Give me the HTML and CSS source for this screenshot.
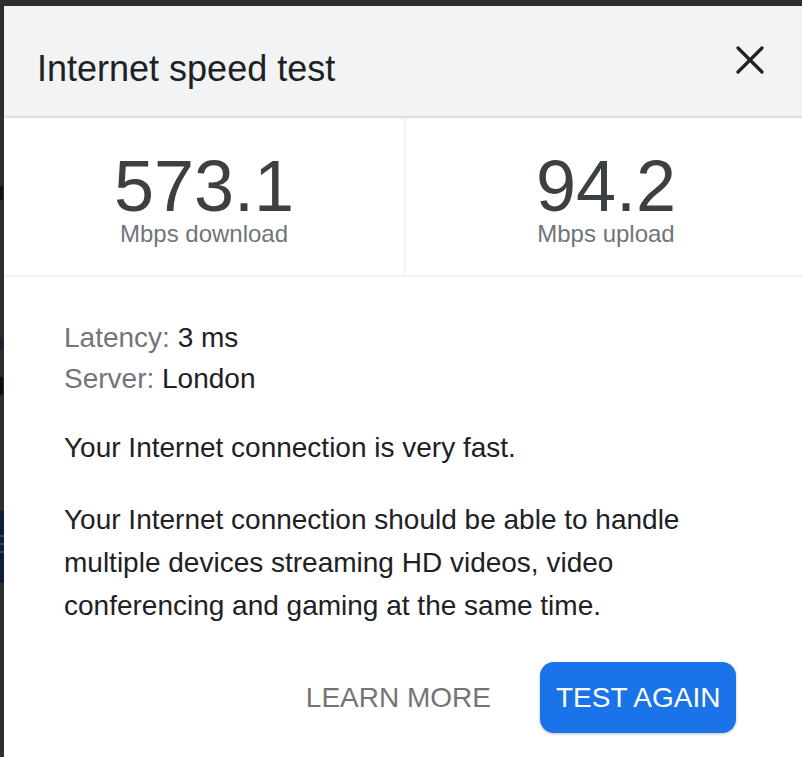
FILE: index.html
```html
<!DOCTYPE html>
<html lang="en">
<head>
<meta charset="utf-8">
<title>Internet speed test</title>
<link rel="stylesheet" href="styles.css">
</head>
<body>
<div class="page">
  <div class="strip">
    <div class="mark mark-a"></div>
    <div class="mark mark-b"></div>
    <div class="mark mark-c"></div>
    <div class="navy">
      <div class="navy-line l1"></div>
      <div class="navy-line l2"></div>
      <div class="navy-line l3"></div>
    </div>
  </div>
  <div class="dialog">
    <header class="header">
      <h1 class="title">Internet speed test</h1>
      <button class="close" aria-label="Close">
        <svg width="28" height="28" viewBox="0 0 28 28"><path d="M2 2 L26 26 M26 2 L2 26" stroke="#202124" stroke-width="3.2" stroke-linecap="round" fill="none"/></svg>
      </button>
    </header>
    <section class="results">
      <div class="result">
        <div class="value">573.1</div>
        <div class="unit">Mbps download</div>
      </div>
      <div class="vdiv"></div>
      <div class="result">
        <div class="value">94.2</div>
        <div class="unit">Mbps upload</div>
      </div>
    </section>
    <section class="body">
      <div class="meta">
        <div><span class="key">Latency:</span> 3 ms</div>
        <div><span class="key">Server:</span> London</div>
      </div>
      <p class="summary">Your Internet connection is very fast.</p>
      <p class="desc">Your Internet connection should be able to handle multiple devices streaming HD videos, video conferencing and gaming at the same time.</p>
      <div class="actions">
        <button class="btn-text">LEARN MORE</button>
        <button class="btn-primary">TEST AGAIN</button>
      </div>
    </section>
  </div>
</div>
</body>
</html>
```
FILE: styles.css
```css
html, body {
  margin: 0;
  padding: 0;
  background: #2e2e2e;
  overflow: hidden;
  font-family: "Liberation Sans", Arial, sans-serif;
}
.page {
  display: flex;
  padding-top: 6px;
  height: 757px;
  box-sizing: border-box;
  width: 806px;
}
.strip {
  width: 4px;
  flex: none;
  display: flex;
  flex-direction: column;
}
.mark {
  width: 3px;
}
.mark-a { margin-top: 180px; height: 14px; background: #101010; }
.mark-b { margin-top: 137px; height: 13px; background: #1a2030; border-radius: 0 3px 3px 0; }
.mark-c { margin-top: 27px; height: 18px; background: #120a0a; }
.navy {
  margin-top: 116px;
  height: 72px;
  width: 4px;
  background: #0b1d3b;
  display: flex;
  flex-direction: column;
}
.navy-line { height: 2px; background: #3b4250; }
.l1 { margin-top: 24px; }
.l2 { margin-top: 6px; }
.l3 { margin-top: 6px; }

.dialog {
  width: 802px;
  flex: none;
  background: #fff;
  display: flex;
  flex-direction: column;
}
.header {
  height: 110px;
  background: #f1f3f4;
  border-bottom: 1px solid #d6d8db;
  box-shadow: 0 1px 2px rgba(0,0,0,0.12);
  display: flex;
  align-items: flex-start;
  position: relative;
  z-index: 1;
}
.title {
  margin: 42px 0 0 33px;
  font-size: 36px;
  font-weight: 400;
  color: #202124;
  line-height: normal;
}
.close {
  margin: 40px 42px 0 auto;
  padding: 0;
  border: 0;
  background: none;
  width: 28px;
  height: 28px;
  display: block;
}
.close svg { display: block; }

.results {
  display: grid;
  grid-template-columns: 1fr 2px 1fr;
  border-bottom: 2px solid #f1f3f4;
  margin-top: 1px;
}
.vdiv { background: #f1f3f4; }
.result {
  display: flex;
  flex-direction: column;
  align-items: center;
  padding: 33px 0 28px;
}
.value {
  font-size: 72px;
  line-height: 70px;
  color: #3c4043;
}
.unit {
  font-size: 24px;
  line-height: 26px;
  color: #70757a;
}

.body {
  padding: 40px 70px 0 60px;
  font-size: 28px;
  color: #202124;
}
.meta { line-height: 41px; }
.key { color: #70757a; }
.summary {
  margin: 27px 0 0;
  line-height: 43px;
}
.desc {
  margin: 29px 0 0;
  line-height: 43px;
}
.actions {
  margin-top: 35px;
  display: flex;
  justify-content: flex-end;
  align-items: center;
  gap: 33px;
}
.btn-text, .btn-primary {
  font-family: "Liberation Sans", Arial, sans-serif;
  font-size: 28px;
  height: 71px;
  padding: 0 16px;
  border: 0;
  border-radius: 14px;
  white-space: nowrap;
  cursor: pointer;
}
.btn-text {
  background: none;
  color: #747474;
}
.btn-primary {
  background: #1a73e8;
  color: #fff;
  width: 196px;
  box-shadow: 0 1px 3px rgba(0,0,0,0.25);
}
```
